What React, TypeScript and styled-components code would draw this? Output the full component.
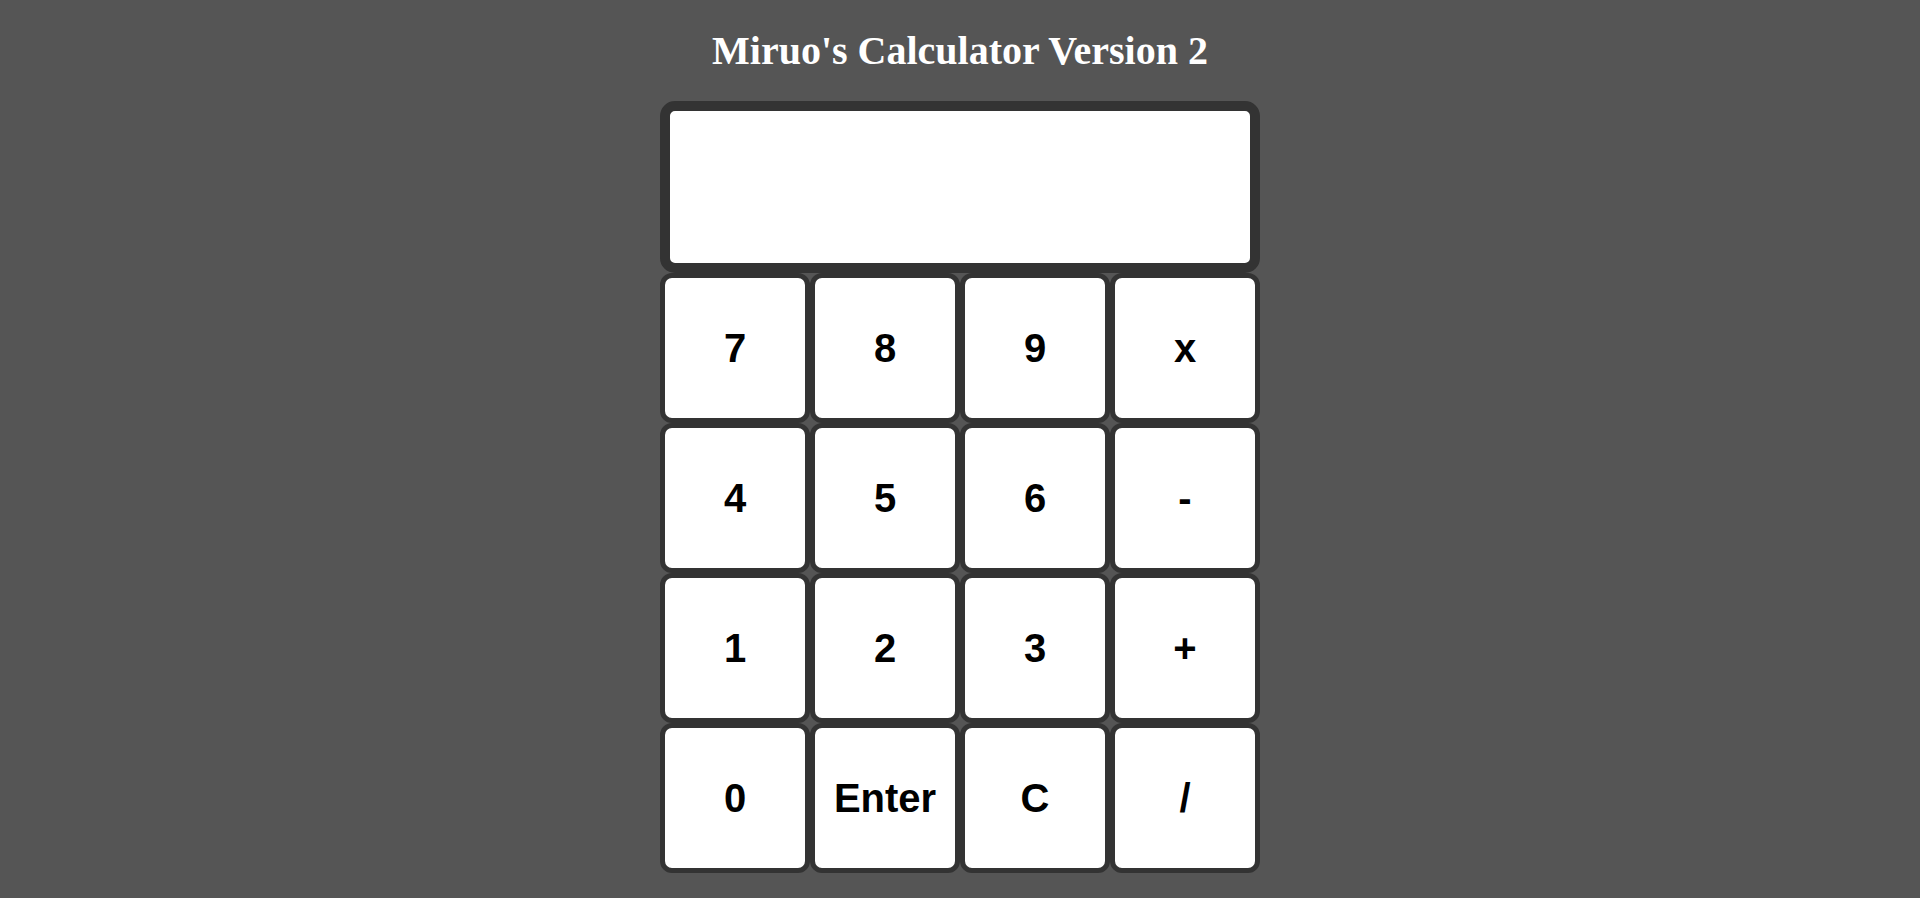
import React from "react";
import styled, { createGlobalStyle } from "styled-components";

const GlobalStyle = createGlobalStyle`
  html, body {
    margin: 0;
    padding: 0;
    background: #555555;
  }
  body {
    font-family: "Liberation Serif", "Times New Roman", serif;
  }
`;

const Page = styled.div`
  display: flex;
  flex-direction: column;
  align-items: center;
  padding-top: 28px;
`;

const Title = styled.h1`
  margin: 0 0 27px;
  font-family: "Liberation Serif", "Times New Roman", serif;
  font-weight: bold;
  font-size: 40px;
  line-height: 46px;
  color: #ffffff;
  text-align: center;
`;

const Calculator = styled.div`
  width: 600px;
  display: flex;
  flex-direction: column;
`;

const Display = styled.div`
  box-sizing: border-box;
  width: 600px;
  height: 172px;
  border: 10px solid #333333;
  border-radius: 15px;
  background: #ffffff;
`;

const Keypad = styled.div`
  display: grid;
  grid-template-columns: repeat(4, 150px);
  grid-auto-rows: 150px;
`;

const Key = styled.button`
  box-sizing: border-box;
  width: 150px;
  height: 150px;
  margin: 0;
  padding: 0;
  border: 5px solid #333333;
  border-radius: 12px;
  background: #ffffff;
  color: #000000;
  font-family: "Liberation Sans", Arial, sans-serif;
  font-weight: bold;
  font-size: 40px;
  display: flex;
  align-items: center;
  justify-content: center;
  cursor: pointer;
`;

const keys = ["7", "8", "9", "x", "4", "5", "6", "-", "1", "2", "3", "+", "0", "Enter", "C", "/"];

export default function App() {
  return (
    <>
      <GlobalStyle />
      <Page>
        <Title>Miruo's Calculator Version 2</Title>
        <Calculator>
          <Display />
          <Keypad>
            {keys.map((k) => (
              <Key key={k}>{k}</Key>
            ))}
          </Keypad>
        </Calculator>
      </Page>
    </>
  );
}
